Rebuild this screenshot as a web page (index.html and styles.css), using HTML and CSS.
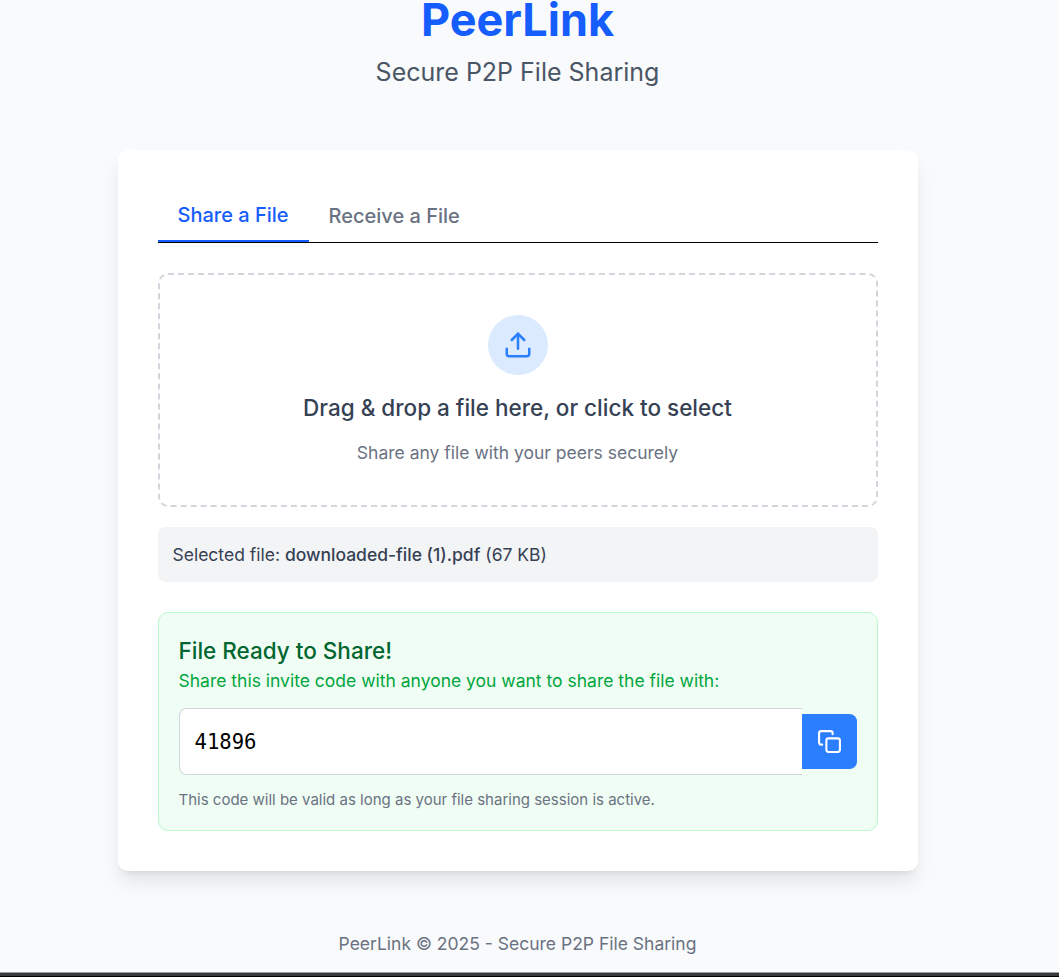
FILE: index.html
```html
<!DOCTYPE html>
<html lang="en">
<head>
<meta charset="utf-8">
<title>PeerLink</title>
<link rel="stylesheet" href="styles.css">
</head>
<body>
<div class="page">
  <header class="header">
    <h1 class="brand">PeerLink</h1>
    <p class="tagline">Secure P2P File Sharing</p>
  </header>
  <main class="card">
    <nav class="tabs">
      <button class="tab tab-active">Share a File</button>
      <button class="tab">Receive a File</button>
    </nav>
    <section class="dropzone">
      <div class="upload-badge">
        <svg class="upload-icon" viewBox="0 0 24 24"><path d="M21 15v4a2 2 0 0 1-2 2H5a2 2 0 0 1-2-2v-4"/><path d="M17 8l-5-5-5 5"/><path d="M12 3v12"/></svg>
      </div>
      <p class="drop-title">Drag &amp; drop a file here, or click to select</p>
      <p class="drop-hint">Share any file with your peers securely</p>
    </section>
    <p class="selected">Selected file: <span class="file-name">downloaded-file (1).pdf</span> (67 KB)</p>
    <section class="ready">
      <h2 class="ready-title">File Ready to Share!</h2>
      <p class="ready-text">Share this invite code with anyone you want to share the file with:</p>
      <div class="code-row">
        <div class="code">41896</div>
        <button class="copy" aria-label="Copy code">
          <svg class="copy-icon" viewBox="0 0 24 24"><rect x="9" y="9" width="13" height="13" rx="2"/><path d="M5 15H4a2 2 0 0 1-2-2V4a2 2 0 0 1 2-2h9a2 2 0 0 1 2 2v1"/></svg>
        </button>
      </div>
      <p class="ready-note">This code will be valid as long as your file sharing session is active.</p>
    </section>
  </main>
  <footer class="footer">PeerLink © 2025 - Secure P2P File Sharing</footer>
</div>
<div class="bottom-edge"></div>
</body>
</html>
```
FILE: styles.css
```css
* { box-sizing: border-box; margin: 0; padding: 0; }
body {
  height: 977px;
  display: flex;
  flex-direction: column;
  overflow: hidden;
  background: #f9fafc;
  font-family: Inter, "Liberation Sans", sans-serif;
  font-size: 17.5px;
  line-height: 25px;
}
button { border: 0; background: none; font: inherit; }
svg { display: block; fill: none; stroke: currentColor; stroke-width: 2; stroke-linecap: round; stroke-linejoin: round; }
.page { flex: 1; width: 1035px; text-align: center; }
.header { margin-bottom: 60px; }
.brand { margin-bottom: 15px; font-size: 45px; line-height: 40px; font-weight: 700; color: #155dfc; }
.tagline { font-size: 25px; line-height: 35px; color: #4a5565; }
.card {
  width: 800px;
  margin: 0 auto;
  padding: 40px;
  border-radius: 10px;
  background: #fff;
  box-shadow: 0 12.5px 18.75px -3.75px rgba(0, 0, 0, .1), 0 5px 7.5px -5px rgba(0, 0, 0, .1);
  text-align: left;
}
.tabs { display: flex; height: 53px; margin-bottom: 30px; border-bottom: 1px solid #000; }
.tab { padding: 10px 20px; font-size: 20px; line-height: 30px; font-weight: 500; color: #6a7282; }
.tab-active { border-bottom: 2px solid #155dfc; color: #155dfc; }
.dropzone {
  display: flex;
  flex-direction: column;
  align-items: center;
  gap: 15px;
  height: 234px;
  padding: 40px;
  border: 2px dashed #d1d5dc;
  border-radius: 10px;
}
.upload-badge { display: flex; align-items: center; justify-content: center; width: 60px; height: 60px; border-radius: 50%; background: #dbeafe; color: #2b7fff; }
.upload-icon { width: 30px; height: 30px; }
.drop-title { font-size: 22.5px; line-height: 35px; font-weight: 500; color: #364153; }
.drop-hint { color: #6a7282; }
.selected { margin: 20px 0 30px; padding: 15px; border-radius: 7.5px; background: #f3f4f6; color: #364153; }
.file-name { font-weight: 500; }
.ready { padding: 20px; border: 1px solid #b9f8cf; border-radius: 10px; background: #f0fdf4; }
.ready-title { font-size: 22.5px; line-height: 35px; font-weight: 500; color: #016630; }
.ready-text { color: #00a63e; }
.code-row { display: flex; align-items: center; margin: 15px 0; }
.code {
  flex: 1;
  height: 67px;
  padding: 16px 15px 14px;
  border: 1px solid #d1d5dc;
  border-right: 0;
  border-radius: 7.5px 0 0 7.5px;
  background: #fff;
  color: #000;
  font-family: "DejaVu Sans Mono", monospace;
  font-size: 20.6px;
  line-height: 35px;
}
.copy { padding: 15px; border-radius: 0 7.5px 7.5px 0; background: #2b7fff; color: #fff; }
.copy-icon { width: 25px; height: 25px; }
.ready-note { font-size: 15px; line-height: 20px; color: #6a7282; }
.footer { margin-top: 60px; color: #6a7282; }
.bottom-edge { height: 5px; border-top: 1px solid #9b9da0; border-bottom: 1px solid #000; background: #37393b; }
```
